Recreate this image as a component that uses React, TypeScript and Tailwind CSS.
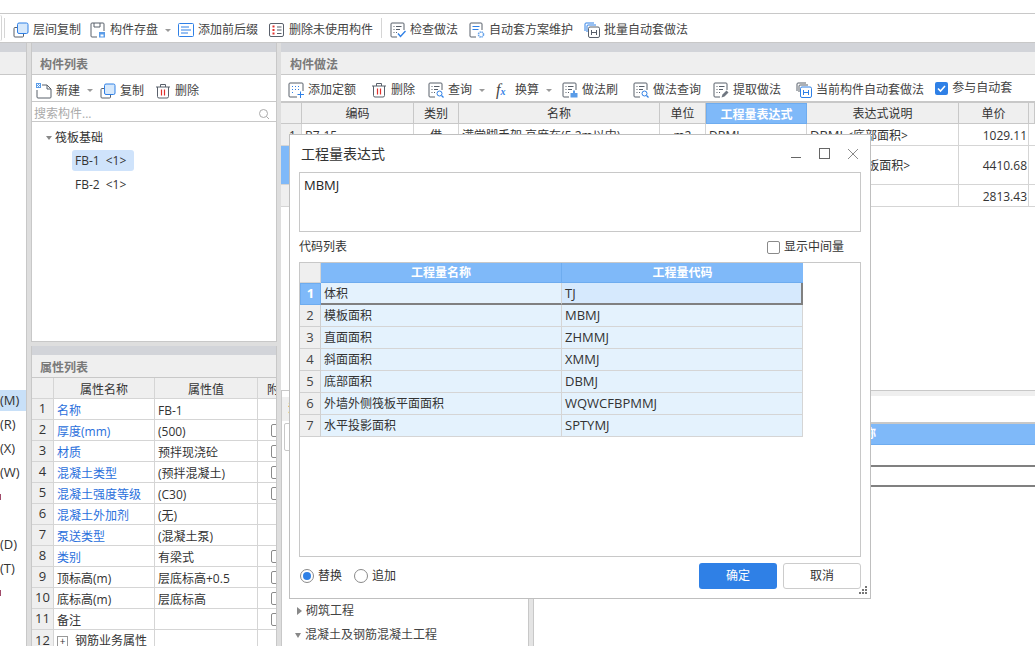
const G = "#59606b";
const B = "#2f80e6";

function Svg({ children }: { children: React.ReactNode }) {
  return (
    <svg width="16" height="16" viewBox="0 0 16 16" fill="none" className="shrink-0">
      {children}
    </svg>
  );
}

function CopyIcon() {
  return (
    <Svg>
      <path d="M4.5 5.5H2a1 1 0 0 0-1 1V14a1 1 0 0 0 1 1h7.5a1 1 0 0 0 1-1v-2.5" stroke={G} />
      <rect x="4.5" y="1" width="10.5" height="10.5" rx="1.5" fill="#d6e8fb" stroke={B} />
    </Svg>
  );
}

function SaveIcon() {
  return (
    <Svg>
      <path d="M7 15H2a1 1 0 0 1-1-1V2a1 1 0 0 1 1-1h11a1 1 0 0 1 1 1v7" stroke={G} />
      <path d="M4 1v4h6V1" stroke={G} />
      <rect x="9" y="10" width="6" height="5.5" fill="#5a9ce8" />
      <rect x="10.5" y="12.5" width="3" height="2" fill="#fff" />
    </Svg>
  );
}

function ListIcon() {
  return (
    <Svg>
      <rect x="0.5" y="1.5" width="15" height="13" rx="1" stroke={B} />
      <path d="M3 5h8M3 8h10M3 11h7" stroke={B} />
    </Svg>
  );
}

function DeleteUnusedIcon() {
  return (
    <Svg>
      <rect x="0.5" y="1.5" width="14" height="13" rx="1.5" stroke={G} />
      <path d="M3.5 4.5h2M3.5 8h2M3.5 11.5h2" stroke="#e0312e" strokeWidth="2" />
      <path d="M8 5h4.5M8 8h4.5M8 11.5h4.5" stroke={G} />
    </Svg>
  );
}

function DocLines({ children }: { children?: React.ReactNode }) {
  return (
    <Svg>
      <path d="M7 15H2a1 1 0 0 1-1-1V2a1 1 0 0 1 1-1h11a1 1 0 0 1 1 1v6" stroke={G} />
      <path d="M3.5 4.5h1M6 4.5h5.5M3.5 7.5h1M6 7.5h4M3.5 10.5h1M6 10.5h1" stroke={G} />
      {children}
    </Svg>
  );
}

function CheckDocIcon() {
  return (
    <DocLines>
      <path d="M8 11.5l2.5 3 5-5.5" stroke={B} strokeWidth="1.4" />
    </DocLines>
  );
}

function GearDocIcon() {
  return (
    <Svg>
      <path d="M7 15H2a1 1 0 0 1-1-1V2a1 1 0 0 1 1-1h10a1 1 0 0 1 1 1v6" stroke={G} />
      <path d="M3.5 4.5h7M3.5 7.5h6" stroke={B} />
      <circle cx="12" cy="12.5" r="2.5" stroke="#6aa5ea" strokeWidth="1.6" strokeDasharray="1.4 0.6" />
    </Svg>
  );
}

function StackHIcon({ active }: { active?: boolean }) {
  const c = active ? B : G;
  const s = active ? G : B;
  return (
    <Svg>
      <path d="M1 9V2a1 1 0 0 1 1-1h8" stroke={s} />
      <path d="M3 10V4a1 1 0 0 1 1-1h8" stroke={s} />
      <rect x="4.5" y="5" width="11" height="10.5" rx="1.5" fill="#fff" stroke={c} />
      <path d="M7.5 8v5M12.5 8v5M7.5 10.5h5" stroke={c} />
    </Svg>
  );
}

function NewIcon() {
  return (
    <Svg>
      <path d="M6 2h5l4 4v8a1 1 0 0 1-1 1H2a1 1 0 0 1-1-1V7" stroke={G} />
      <path d="M11 2v4h4" stroke={G} />
      <rect x="0" y="0" width="5" height="5" fill="#5a9ce8" />
      <path d="M1 1h1v1H1zM3 1h1v1H3zM2 2h1v1H2zM1 3h1v1H1zM3 3h1v1H3z" fill="#fff" />
    </Svg>
  );
}

function TrashIcon() {
  return (
    <Svg>
      <path d="M1 4h14M5.5 4V1.5h5V4" stroke={G} />
      <path d="M2.5 4v9.5a1.5 1.5 0 0 0 1.5 1.5h8a1.5 1.5 0 0 0 1.5-1.5V4" stroke={G} />
      <path d="M6.5 6.5v6M9.5 6.5v6" stroke="#e0312e" strokeWidth="1.2" />
    </Svg>
  );
}

function AddIcon() {
  return (
    <Svg>
      <path d="M9 15H2a1 1 0 0 1-1-1V2a1 1 0 0 1 1-1h12a1 1 0 0 1 1 1v7" stroke={G} />
      <path d="M4 4.5h1M7 4.5h1M10 4.5h1M4 7.5h1M7 7.5h1M10 7.5h1M4 10.5h1" stroke={B} />
      <path d="M12.5 9.5v6.5M9.5 12.5H16" stroke={B} />
    </Svg>
  );
}

function QueryIcon() {
  return (
    <DocLines>
      <circle cx="11.5" cy="11.5" r="2.5" stroke={B} />
      <path d="M13.5 13.5l2 2" stroke={B} strokeWidth="1.3" />
    </DocLines>
  );
}

function BrushIcon() {
  return (
    <DocLines>
      <path d="M11 8.5h2v2.5h-2z" fill="#5a9ce8" />
      <rect x="8.5" y="11" width="7" height="4.5" fill="#5a9ce8" />
    </DocLines>
  );
}

function PickIcon() {
  return (
    <DocLines>
      <path d="M8.5 15.5l1-3 4-4 2 2-4 4z" fill="#6f7680" />
    </DocLines>
  );
}

function Caret() {
  return <span className="ml-[7px] mr-[7px] h-0 w-0 border-x-[3px] border-t-[3px] border-x-transparent border-t-[#9a9a9a]" />;
}

function Tool({ icon, label, className }: { icon: React.ReactNode; label: string; className?: string }) {
  return (
    <div className={`flex items-center gap-[4px] whitespace-nowrap ${className ?? ""}`}>
      {icon}
      <span>{label}</span>
    </div>
  );
}

function PanelHead({ title, inset }: { title: string; inset?: boolean }) {
  return (
    <div className="shrink-0">
      <div className="h-[9px] bg-[#d2d4d9]" />
      <div className={inset ? "flex h-[23px] items-center border-b border-[#c8c8c8] bg-[#efefef] pl-[8px] pt-[3px] font-bold text-[#7a7a7a]" : "flex h-[23px] items-center border-b border-[#c8c8c8] bg-[#efefef] pl-[9px] pt-[3px] font-bold text-[#7a7a7a]"}>{title}</div>
    </div>
  );
}

const props = [
  { name: "名称", value: "FB-1", blue: true, box: false },
  { name: "厚度(mm)", value: "(500)", blue: true, box: true },
  { name: "材质", value: "预拌现浇砼", blue: true, box: true },
  { name: "混凝土类型", value: "(预拌混凝土)", blue: true, box: true },
  { name: "混凝土强度等级", value: "(C30)", blue: true, box: true },
  { name: "混凝土外加剂", value: "(无)", blue: true, box: false },
  { name: "泵送类型", value: "(混凝土泵)", blue: true, box: false },
  { name: "类别", value: "有梁式", blue: true, box: true },
  { name: "顶标高(m)", value: "层底标高+0.5", blue: false, box: true },
  { name: "底标高(m)", value: "层底标高", blue: false, box: true },
  { name: "备注", value: "", blue: false, box: true },
];

const codes = [
  ["体积", "TJ"],
  ["模板面积", "MBMJ"],
  ["直面面积", "ZHMMJ"],
  ["斜面面积", "XMMJ"],
  ["底部面积", "DBMJ"],
  ["外墙外侧筏板平面面积", "WQWCFBPMMJ"],
  ["水平投影面积", "SPTYMJ"],
];

const sideRows = [
  { t: "(M)", on: true },
  { t: "(R)" },
  { t: "(X)" },
  { t: "(W)" },
  { t: ")", red: true },
  { t: "" },
  { t: "(D)" },
  { t: "(T)" },
  { t: ")", red: true },
];

const methodRows = [
  { h: "h-[22px]", code: "B7-15", kind: "借", name: "满堂脚手架 高度在(5.2m以内)", unit: "m2", expr: "DBMJ", noteCode: "DBMJ", note: " <底部面积>", price: "1029.11" },
  { h: "h-[39px]", code: "", kind: "", name: "", unit: "", expr: "MBMJ", noteCode: "MBMJ", note: " <模板面积>", price: "4410.68", on: true },
  { h: "h-[22px]", code: "", kind: "", name: "", unit: "", expr: "", noteCode: "", note: "", price: "2813.43" },
];

function Dialog() {
  return (
    <div className="absolute left-[289px] top-[134px] flex h-[465px] w-[582px] flex-col border border-[#bfbfbf] bg-white px-[9px] text-[#333]">
      <div className="flex h-[37px] shrink-0 items-center justify-between pl-[2px]">
        <span className="text-[14px] text-[#333]">工程量表达式</span>
        <div className="flex items-center gap-[17px] pr-[2px]">
          <span className="mr-px mt-[7px] h-px w-[10px] bg-[#666]" />
          <span className="h-[11px] w-[11px] border border-[#666]" />
          <svg width="12" height="12" viewBox="0 0 12 12" stroke="#8a8a8a">
            <path d="M1 1l10 10M11 1L1 11" />
          </svg>
        </div>
      </div>
      <div className="h-[60px] shrink-0 border border-[#c8c8c8] px-[4px] pt-[3px] text-[13px] text-[#222]">MBMJ</div>
      <div className="flex h-[30px] shrink-0 items-center justify-between pr-[17px]">
        <span>代码列表</span>
        <label className="flex items-center gap-[4px]">
          <span className="h-[13px] w-[13px] rounded-[2px] border border-[#8a8a8a]" />
          显示中间量
        </label>
      </div>
      <div className="h-[295px] shrink-0 border border-[#c8c8c8]">
        <div className="grid w-[503px] grid-cols-[21px_241px_241px]">
          <div className="h-[20px] border-b border-r border-[#d5d5d5] bg-[#efefef]" />
          <div className="flex h-[20px] items-center justify-center border-b border-r border-[#6eacef] bg-[#7fb9f9] pt-px font-bold text-white">工程量名称</div>
          <div className="flex h-[20px] items-center justify-center border-b border-[#6eacef] bg-[#7fb9f9] pt-px font-bold text-white">工程量代码</div>
          {codes.map(([name, code], i) => (
            <div key={code} className="contents">
              <div
                className={
                  i === 0
                    ? "flex h-[22px] items-center justify-center border border-[#6eacef] bg-[#7fb9f9] text-[13px] font-bold text-white"
                    : "flex h-[22px] items-center justify-center border-b border-r border-[#d0d0d0] bg-[#efefef] text-[13px] text-[#444]"
                }
              >
                {i + 1}
              </div>
              <div
                className={
                  i === 0
                    ? "flex h-[22px] items-center border-b-2 border-r border-b-[#808080] border-r-[#d5d5d5] bg-[#e4f2fd] pl-[3px] pt-[2px]"
                    : "flex h-[22px] items-center border-b border-r border-[#d5d5d5] bg-[#e4f2fd] pl-[3px]"
                }
              >
                {name}
              </div>
              <div
                className={
                  i === 0
                    ? "flex h-[22px] items-center border-b-2 border-r-2 border-[#808080] bg-[#d6e9fd] pl-[3px] pt-[2px] text-[13px]"
                    : "flex h-[22px] items-center border-b border-r border-[#d5d5d5] bg-[#e4f2fd] pl-[3px] text-[13px]"
                }
              >
                {code}
              </div>
            </div>
          ))}
        </div>
      </div>
      <div className="flex flex-1 items-start justify-between pt-[6px]">
        <div className="flex h-[26px] items-center pl-px">
          <span className="flex h-[14px] w-[14px] items-center justify-center rounded-full border border-[#8a8a8a]">
            <span className="h-[8px] w-[8px] rounded-full bg-[#2f80e6]" />
          </span>
          <span className="ml-[4px]">替换</span>
          <span className="ml-[12px] h-[14px] w-[14px] rounded-full border border-[#8a8a8a]" />
          <span className="ml-[4px]">追加</span>
        </div>
        <div className="flex gap-[6px]">
          <button className="h-[26px] w-[78px] rounded-[3px] bg-[#2f80e6] text-white">确定</button>
          <button className="h-[26px] w-[78px] rounded-[3px] border border-[#cccccc] bg-white text-[#333]">取消</button>
        </div>
      </div>
      <svg width="9" height="9" viewBox="0 0 9 9" fill="#777" className="absolute bottom-[3px] right-[2px]">
        <path d="M6 0h2v2H6zM3 3h2v2H3zM6 3h2v2H6zM0 6h2v2H0zM3 6h2v2H3zM6 6h2v2H6z" />
      </svg>
    </div>
  );
}

export default function App() {
  return (
    <div className="relative h-[646px] w-[1035px] overflow-hidden bg-white text-[12px] text-[#444] [font-family:'Open_Sans','Noto_Sans_CJK_SC',sans-serif]">
      <div className="h-[13px]" />
      {/* top toolbar */}
      <div className="flex h-[30px] items-center border-y border-[#c8c8c8] pt-[4px]">
        <span className="h-[26px] w-[2px] -translate-y-[2px] rounded-r-[2px] border-r border-[#d5d5d5]" />
        <span className="ml-[2px] h-[20px] w-px -translate-y-[2px] bg-[#d5d5d5]" />
        <Tool icon={<CopyIcon />} label="层间复制" className="ml-[8px]" />
        <Tool icon={<SaveIcon />} label="构件存盘" className="ml-[9px]" />
        <Caret />
        <Tool icon={<ListIcon />} label="添加前后缀" />
        <Tool icon={<DeleteUnusedIcon />} label="删除未使用构件" className="ml-[11px]" />
        <span className="mx-[8px] h-[20px] w-px -translate-y-[2px] bg-[#d5d5d5]" />
        <Tool icon={<CheckDocIcon />} label="检查做法" />
        <Tool icon={<GearDocIcon />} label="自动套方案维护" className="ml-[11px]" />
        <Tool icon={<StackHIcon />} label="批量自动套做法" className="ml-[11px]" />
      </div>

      <div className="flex h-[603px] bg-[#dedede]">
        {/* left strip */}
        <div className="w-[27px] shrink-0 overflow-hidden border-r border-[#c8c8c8] bg-white">
          <div className="h-[9px] bg-[#d2d4d9]" />
          <div className="h-[23px] border-b border-[#c8c8c8] bg-[#efefef]" />
          <div className="flex flex-col pt-[315px]">
            {sideRows.map((r, i) => (
              <div key={i} className={r.on ? "flex h-[21px] items-center bg-[#c8e0f8] text-[13px] text-[#333]" : "mt-[3px] flex h-[21px] items-center text-[13px] text-[#333]"}>
                {r.red ? <span className="h-[6px] w-px bg-[#a04a6a]" /> : r.t}
              </div>
            ))}
          </div>
        </div>

        {/* component list + properties */}
        <div className="ml-[4px] flex w-[246px] shrink-0 flex-col">
          <div className="flex h-[299px] shrink-0 flex-col border-x border-b border-[#c8c8c8] bg-white">
            <PanelHead title="构件列表" inset />
            <div className="flex h-[27px] shrink-0 items-center border-b border-[#c8c8c8] pl-[4px] pt-[5px]">
              <Tool icon={<NewIcon />} label="新建" />
              <Caret />
              <Tool icon={<CopyIcon />} label="复制" />
              <Tool icon={<TrashIcon />} label="删除" className="ml-[11px]" />
            </div>
            <div className="flex h-[20px] shrink-0 items-center justify-between border-b border-[#c8c8c8] pl-[2px] pr-[6px] pt-[4px] text-[#aaa]">
              <span>搜索构件...</span>
              <svg width="12" height="12" viewBox="0 0 12 12" fill="none" stroke="#aaa">
                <circle cx="5.5" cy="5.5" r="4" />
                <path d="M8.5 8.5l2.5 2.5" />
              </svg>
            </div>
            <div className="flex flex-col pl-[14px] pt-[5px] text-[#333]">
              <div className="flex h-[21px] items-center gap-[3px]">
                <span className="h-0 w-0 border-x-[3px] border-t-[4px] border-x-transparent border-t-[#888]" />
                <span>筏板基础</span>
              </div>
              <div className="ml-[26px] mt-[2px] flex h-[21px] w-[62px] items-center rounded-[3px] bg-[#cfe3fb] pl-[3px] whitespace-nowrap">
                FB-1<span className="ml-[6px]">&lt;1&gt;</span>
              </div>
              <div className="ml-[26px] mt-[3px] flex h-[21px] items-center pl-[3px] whitespace-nowrap">
                FB-2<span className="ml-[6px]">&lt;1&gt;</span>
              </div>
            </div>
          </div>
          <div className="mt-[4px] flex min-h-0 flex-1 flex-col overflow-hidden border-x border-[#c8c8c8] bg-white">
            <PanelHead title="属性列表" inset />
            <div className="grid grid-cols-[22px_101px_103px_18px] text-[#333]">
              <div className="h-[21px] border-b border-r border-[#d5d5d5] bg-[#efefef]" />
              <div className="flex h-[21px] items-center justify-center border-b border-r border-[#d5d5d5] bg-[#efefef] pt-[3px]">属性名称</div>
              <div className="flex h-[21px] items-center justify-center border-b border-r border-[#d5d5d5] bg-[#efefef] pt-[3px]">属性值</div>
              <div className="flex h-[21px] items-center overflow-hidden border-b border-[#d5d5d5] bg-[#efefef] pl-[9px] pt-[3px]">附</div>
              {props.map((p, i) => (
                <div key={p.name} className="contents">
                  <div className="flex h-[21px] items-center justify-center border-b border-r border-[#d5d5d5] bg-[#efefef] text-[13px]">{i + 1}</div>
                  <div className={p.blue ? "flex h-[21px] items-center border-b border-r border-[#d5d5d5] pl-[3px] pt-[3px] text-[#2a6fdc]" : "flex h-[21px] items-center border-b border-r border-[#d5d5d5] pl-[3px] pt-[3px]"}>{p.name}</div>
                  <div className="flex h-[21px] items-center border-b border-r border-[#d5d5d5] pl-[3px] pt-[3px]">{p.value}</div>
                  <div className="flex h-[21px] items-center overflow-hidden border-b border-[#d5d5d5] pl-[13px]">
                    {p.box && <span className="h-[13px] w-[13px] shrink-0 rounded-[2px] border border-[#8a8a8a]" />}
                  </div>
                </div>
              ))}
              <div className="flex h-[21px] items-center justify-center border-r border-[#d5d5d5] bg-[#efefef] text-[13px]">12</div>
              <div className="flex h-[21px] items-center gap-[7px] whitespace-nowrap border-r border-[#d5d5d5] pl-[3px] pt-[1px]">
                <span className="flex h-[11px] w-[11px] shrink-0 items-center justify-center border border-[#999] text-[10px] leading-none">+</span>
                钢筋业务属性
              </div>
              <div className="h-[21px] border-r border-[#d5d5d5]" />
              <div className="h-[21px]" />
            </div>
          </div>
        </div>

        {/* component methods */}
        <div className="ml-[4px] flex min-w-0 flex-1 flex-col">
          <div className="flex h-[347px] shrink-0 flex-col bg-white">
            <PanelHead title="构件做法" />
            <div className="flex h-[28px] shrink-0 items-center border-b-2 border-[#c8c8c8] pl-[7px] pt-[4px]">
              <Tool icon={<AddIcon />} label="添加定额" />
              <Tool icon={<TrashIcon />} label="删除" className="ml-[15px]" />
              <Tool icon={<QueryIcon />} label="查询" className="ml-[13px]" />
              <Caret />
              <div className="ml-[4px] flex items-center gap-[4px]">
                <span className="w-[15px] text-[16px] italic leading-none text-[#444] [font-family:'Liberation_Serif',serif]">
                  f<span className="text-[10px] font-bold text-[#2f80e6]">x</span>
                </span>
                <span>换算</span>
              </div>
              <Caret />
              <Tool icon={<BrushIcon />} label="做法刷" className="ml-[3px]" />
              <Tool icon={<QueryIcon />} label="做法查询" className="ml-[15px]" />
              <Tool icon={<PickIcon />} label="提取做法" className="ml-[12px]" />
              <Tool icon={<StackHIcon active />} label="当前构件自动套做法" className="ml-[15px]" />
              <div className="ml-[11px] flex -translate-y-[2px] items-center gap-[4px] whitespace-nowrap">
                <span className="flex h-[13px] w-[13px] items-center justify-center rounded-[2px] bg-[#2f80e6]">
                  <svg width="11" height="11" viewBox="0 0 11 11" fill="none" stroke="#fff" strokeWidth="1.6">
                    <path d="M2 5.5l2.5 2.5L9 3" />
                  </svg>
                </span>
                参与自动套
              </div>
            </div>
            <div className="grid grid-cols-[21px_112px_45px_201px_46px_101px_152px_70px_6px] text-[#333]">
              {["", "编码", "类别", "名称", "单位"].map((h, i) => (
                <div key={i} className="flex h-[21px] items-center justify-center border-b border-r border-[#c8c8c8] bg-[#efefef] pt-[2px]">{h}</div>
              ))}
              <div className="flex h-[21px] items-center justify-center border border-[#6eacef] bg-[#7fb9f9] pt-[2px] font-bold text-white">工程量表达式</div>
              {["表达式说明", "单价", ""].map((h, i) => (
                <div key={i} className="flex h-[21px] items-center justify-center border-b border-r border-[#c8c8c8] bg-[#efefef] pt-[2px]">{h}</div>
              ))}
              {methodRows.map((r, i) => (
                <div key={i} className="contents">
                  <div className={r.on ? `${r.h} border-b border-r border-[#d5d5d5] bg-[#7fb9f9] text-white` : `${r.h} flex items-center justify-center border-b border-r border-[#d5d5d5] bg-[#efefef] pl-[3px] pt-[2px]`}>{r.on || i === 2 ? "" : i + 1}</div>
                  <div className={`${r.h} flex items-center border-b border-r border-[#d5d5d5] pl-[3px] pt-[2px]`}>{r.code}</div>
                  <div className={`${r.h} flex items-center justify-center border-b border-r border-[#d5d5d5] pt-[2px]`}>{r.kind}</div>
                  <div className={`${r.h} flex items-center overflow-hidden whitespace-nowrap border-b border-r border-[#d5d5d5] pl-[3px] pt-[2px]`}>{r.name}</div>
                  <div className={`${r.h} flex items-center justify-center border-b border-r border-[#d5d5d5] pt-[2px]`}>{r.unit}</div>
                  <div className={`${r.h} flex items-center border-b border-r border-[#d5d5d5] pl-[3px] pt-[2px]`}>{r.expr}</div>
                  <div className={`${r.h} flex items-center whitespace-pre border-b border-r border-[#d5d5d5] pl-[3px] pt-[2px]`}>
                    <span className="text-[13px]">{r.noteCode}</span>
                    {r.note}
                  </div>
                  <div className={`${r.h} flex items-center justify-end border-b border-r border-[#d5d5d5] pr-[1px] pt-[2px]`}>{r.price}</div>
                  <div className={`${r.h} border-b border-[#d5d5d5]`} />
                </div>
              ))}
            </div>
          </div>

          {/* lower panels */}
          <div className="flex min-h-0 flex-1 border-t border-[#c8c8c8]">
            <div className="w-[247px] shrink-0 overflow-hidden border-l border-[#c8c8c8] bg-white">
              <div className="mt-[6px] flex h-[24px] items-center bg-[#efefef] pl-[6px] font-bold text-[#c98a3a]">
                <span className="w-[1px] overflow-hidden whitespace-nowrap">清单</span>
              </div>
              <div className="mx-[2px] mt-[2px] h-[28px] rounded-[2px] border border-[#c8c8c8]" />
              <div className="flex flex-col pl-[15px] pt-[148px] text-[#444]">
                <div className="flex h-[24px] items-center gap-[4px] whitespace-nowrap">
                  <span className="h-0 w-0 border-y-[4px] border-l-[5px] border-y-transparent border-l-[#888]" />
                  砌筑工程
                </div>
                <div className="-ml-[2px] flex h-[24px] items-center gap-[4px] whitespace-nowrap">
                  <span className="h-0 w-0 border-x-[3.5px] border-t-[5px] border-x-transparent border-t-[#888]" />
                  混凝土及钢筋混凝土工程
                </div>
              </div>
            </div>
            <div className="w-[6px] shrink-0 border-x border-[#c8c8c8] bg-[#e4e4e4]" />
            <div className="min-w-0 flex-1 bg-white">
              <div className="h-[5px] bg-[#efefef]" />
              <div className="h-[26px]" />
              <div className="flex h-[23px] items-center border-b border-t-2 border-b-[#6eacef] border-t-[#c8c8c8] bg-[#7fb9f9] pl-[318px] font-bold text-white">名称</div>
              <div className="h-[22px] border-b-2 border-[#808080]" />
              <div className="h-[20px] border-b-2 border-[#808080]" />
            </div>
          </div>
        </div>
      </div>

      <Dialog />
    </div>
  );
}
